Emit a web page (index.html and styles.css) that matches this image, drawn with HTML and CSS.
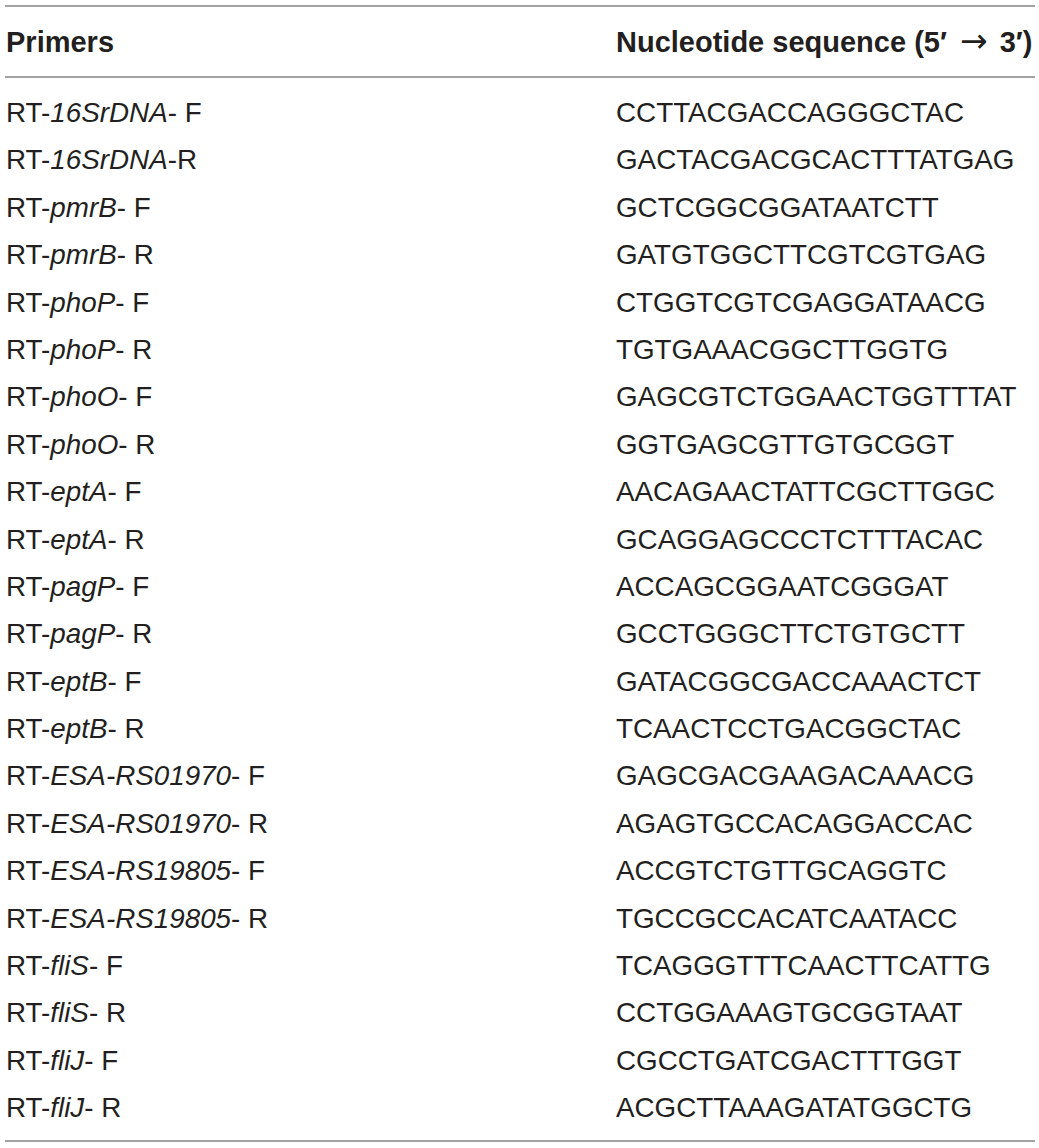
FILE: index.html
```html
<!DOCTYPE html>
<html>
<head>
<meta charset="utf-8">
<link rel="stylesheet" href="styles.css">
</head>
<body>
<div class="tbl">
  <div class="head">
    <div class="cell">Primers</div>
    <div class="cell">Nucleotide sequence (5′ <span class="arrow">→</span> 3′)</div>
  </div>
  <div class="rows">
    <div class="row"><div class="cell">RT-<i>16SrDNA</i>- F</div><div class="cell">CCTTACGACCAGGGCTAC</div></div>
    <div class="row"><div class="cell">RT-<i>16SrDNA</i>-R</div><div class="cell">GACTACGACGCACTTTATGAG</div></div>
    <div class="row"><div class="cell">RT-<i>pmrB</i>- F</div><div class="cell">GCTCGGCGGATAATCTT</div></div>
    <div class="row"><div class="cell">RT-<i>pmrB</i>- R</div><div class="cell">GATGTGGCTTCGTCGTGAG</div></div>
    <div class="row"><div class="cell">RT-<i>phoP</i>- F</div><div class="cell">CTGGTCGTCGAGGATAACG</div></div>
    <div class="row"><div class="cell">RT-<i>phoP</i>- R</div><div class="cell">TGTGAAACGGCTTGGTG</div></div>
    <div class="row"><div class="cell">RT-<i>phoO</i>- F</div><div class="cell">GAGCGTCTGGAACTGGTTTAT</div></div>
    <div class="row"><div class="cell">RT-<i>phoO</i>- R</div><div class="cell">GGTGAGCGTTGTGCGGT</div></div>
    <div class="row"><div class="cell">RT-<i>eptA</i>- F</div><div class="cell">AACAGAACTATTCGCTTGGC</div></div>
    <div class="row"><div class="cell">RT-<i>eptA</i>- R</div><div class="cell">GCAGGAGCCCTCTTTACAC</div></div>
    <div class="row"><div class="cell">RT-<i>pagP</i>- F</div><div class="cell">ACCAGCGGAATCGGGAT</div></div>
    <div class="row"><div class="cell">RT-<i>pagP</i>- R</div><div class="cell">GCCTGGGCTTCTGTGCTT</div></div>
    <div class="row"><div class="cell">RT-<i>eptB</i>- F</div><div class="cell">GATACGGCGACCAAACTCT</div></div>
    <div class="row"><div class="cell">RT-<i>eptB</i>- R</div><div class="cell">TCAACTCCTGACGGCTAC</div></div>
    <div class="row"><div class="cell">RT-<i>ESA-RS01970</i>- F</div><div class="cell">GAGCGACGAAGACAAACG</div></div>
    <div class="row"><div class="cell">RT-<i>ESA-RS01970</i>- R</div><div class="cell">AGAGTGCCACAGGACCAC</div></div>
    <div class="row"><div class="cell">RT-<i>ESA-RS19805</i>- F</div><div class="cell">ACCGTCTGTTGCAGGTC</div></div>
    <div class="row"><div class="cell">RT-<i>ESA-RS19805</i>- R</div><div class="cell">TGCCGCCACATCAATACC</div></div>
    <div class="row"><div class="cell">RT-<i>fliS</i>- F</div><div class="cell">TCAGGGTTTCAACTTCATTG</div></div>
    <div class="row"><div class="cell">RT-<i>fliS</i>- R</div><div class="cell">CCTGGAAAGTGCGGTAAT</div></div>
    <div class="row"><div class="cell">RT-<i>fliJ</i>- F</div><div class="cell">CGCCTGATCGACTTTGGT</div></div>
    <div class="row"><div class="cell">RT-<i>fliJ</i>- R</div><div class="cell">ACGCTTAAAGATATGGCTG</div></div>
  </div>
</div>
</body>
</html>
```
FILE: styles.css
```css
html, body {
  margin: 0;
  background: #ffffff;
}
body {
  padding: 5px 0 0 5px;
  font-family: "Liberation Sans", Arial, sans-serif;
  color: #231f20;
}
.tbl {
  width: 1030px;
  border-top: 2px solid #a3a3a3;
  border-bottom: 2px solid #a3a3a3;
}
.head {
  display: grid;
  grid-template-columns: 610px 1fr;
  align-items: center;
  height: 69px;
  padding-left: 1px;
  border-bottom: 2px solid #a3a3a3;
  font-weight: bold;
  font-size: 29px;
  line-height: 34px;
}
.arrow {
  font-family: "DejaVu Sans", sans-serif;
  font-weight: normal;
  font-size: 33px;
  line-height: 20px;
  margin: 0 4px 0 5px;
}
.rows {
  padding: 11px 0 8.5px;
}
.row {
  display: grid;
  grid-template-columns: 610px 1fr;
  padding-left: 1px;
  height: 47.4px;
  line-height: 47.4px;
  font-size: 27.8px;
}
.cell {
  white-space: nowrap;
}
```
